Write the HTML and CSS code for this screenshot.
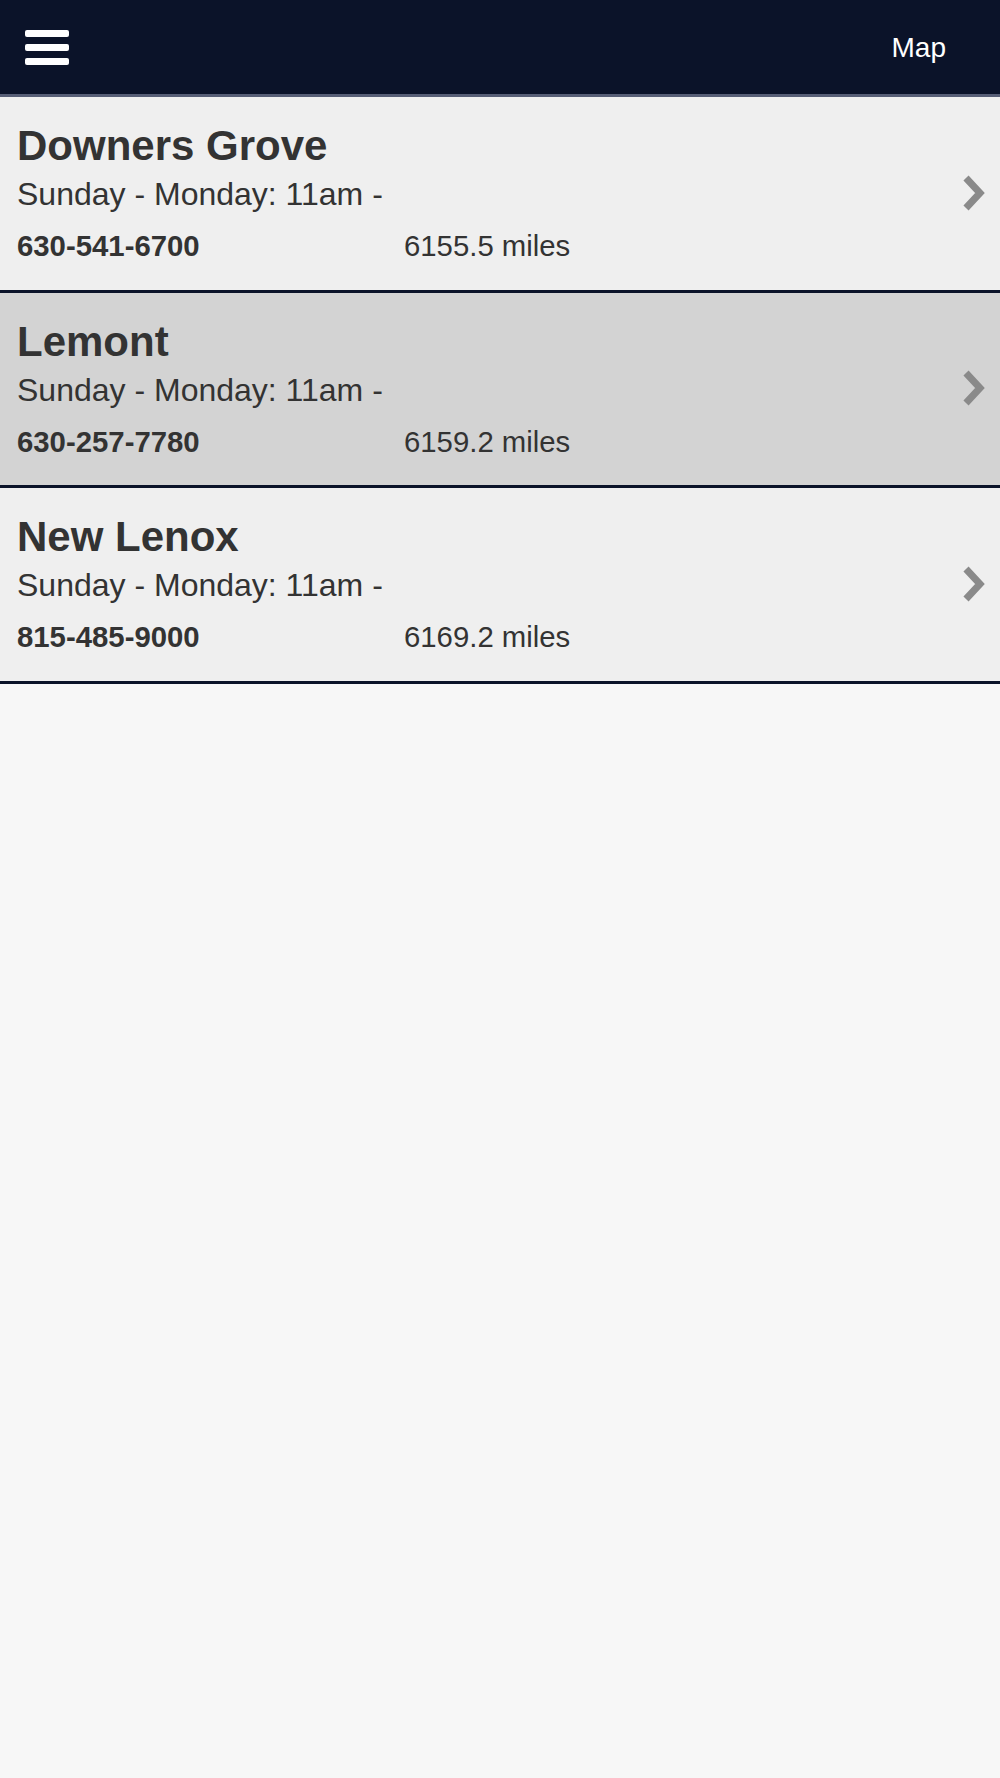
FILE: index.html
```html
<!DOCTYPE HTML>
<html lang="en">
<head>
    <meta charset="UTF-8">
    <meta name="viewport" content="width=device-width, initial-scale=1.0">
    <title>Locations</title>
    <link rel="stylesheet" href="styles.css">
</head>
<body>

    <header class="top-bar">
        <button class="menu-button" aria-label="Menu">
            <span></span>
            <span></span>
            <span></span>
        </button>
        <a class="map-link" href="#">Map</a>
    </header>

    <ul class="location-list">
        <li class="location">
            <div class="location-info">
                <h2>Downers Grove</h2>
                <p class="hours">Sunday - Monday: 11am -</p>
                <div class="details">
                    <span class="phone">630-541-6700</span>
                    <span class="distance">6155.5 miles</span>
                </div>
            </div>
            <svg class="chevron" width="26" height="40" viewBox="0 0 26 40">
                <polyline points="5,5 19,20 5,35" />
            </svg>
        </li>
        <li class="location selected">
            <div class="location-info">
                <h2>Lemont</h2>
                <p class="hours">Sunday - Monday: 11am -</p>
                <div class="details">
                    <span class="phone">630-257-7780</span>
                    <span class="distance">6159.2 miles</span>
                </div>
            </div>
            <svg class="chevron" width="26" height="40" viewBox="0 0 26 40">
                <polyline points="5,5 19,20 5,35" />
            </svg>
        </li>
        <li class="location">
            <div class="location-info">
                <h2>New Lenox</h2>
                <p class="hours">Sunday - Monday: 11am -</p>
                <div class="details">
                    <span class="phone">815-485-9000</span>
                    <span class="distance">6169.2 miles</span>
                </div>
            </div>
            <svg class="chevron" width="26" height="40" viewBox="0 0 26 40">
                <polyline points="5,5 19,20 5,35" />
            </svg>
        </li>
    </ul>

</body>
</html>
```

FILE: styles.css
```css
body {
    margin: 0;
    min-height: 1778px;
    font-family: "Liberation Sans", Arial, Helvetica, sans-serif;
    background-color: #f7f7f7;
    color: #333;
}
.top-bar {
    height: 94px;
    display: flex;
    align-items: center;
    justify-content: space-between;
    padding: 0 54px 0 25px;
    background-color: #0b1329;
    border-bottom: 3px solid #575e76;
}
.menu-button {
    display: flex;
    flex-direction: column;
    gap: 7px;
    width: 44px;
    padding: 0;
    margin-top: 1px;
    background: none;
    border: none;
    cursor: pointer;
}
.menu-button span {
    display: block;
    height: 7px;
    background-color: #fff;
    border-radius: 2px;
}
.map-link {
    color: #fff;
    font-size: 28px;
    text-decoration: none;
    margin-top: 2px;
}
.location-list {
    list-style: none;
    margin: 0;
    padding: 0;
}
.location {
    display: flex;
    align-items: center;
    padding: 25px 13px 26.5px 17px;
    background-color: #efefef;
    border-bottom: 3px solid #0b1329;
}
.location.selected {
    background-color: #d3d3d3;
}
.location-info {
    flex: 1;
}
.location h2 {
    margin: 0 0 6px;
    font-size: 42px;
    line-height: 48px;
    font-weight: bold;
}
.hours {
    margin: 0 0 17px;
    font-size: 32px;
    line-height: 36px;
}
.details {
    display: flex;
    font-size: 29.33px;
    line-height: 34px;
}
.phone {
    width: 387px;
    font-weight: bold;
}
.chevron {
    flex-shrink: 0;
}
.chevron polyline {
    fill: none;
    stroke: #8a8a8a;
    stroke-width: 7;
    stroke-linejoin: miter;
}
```
